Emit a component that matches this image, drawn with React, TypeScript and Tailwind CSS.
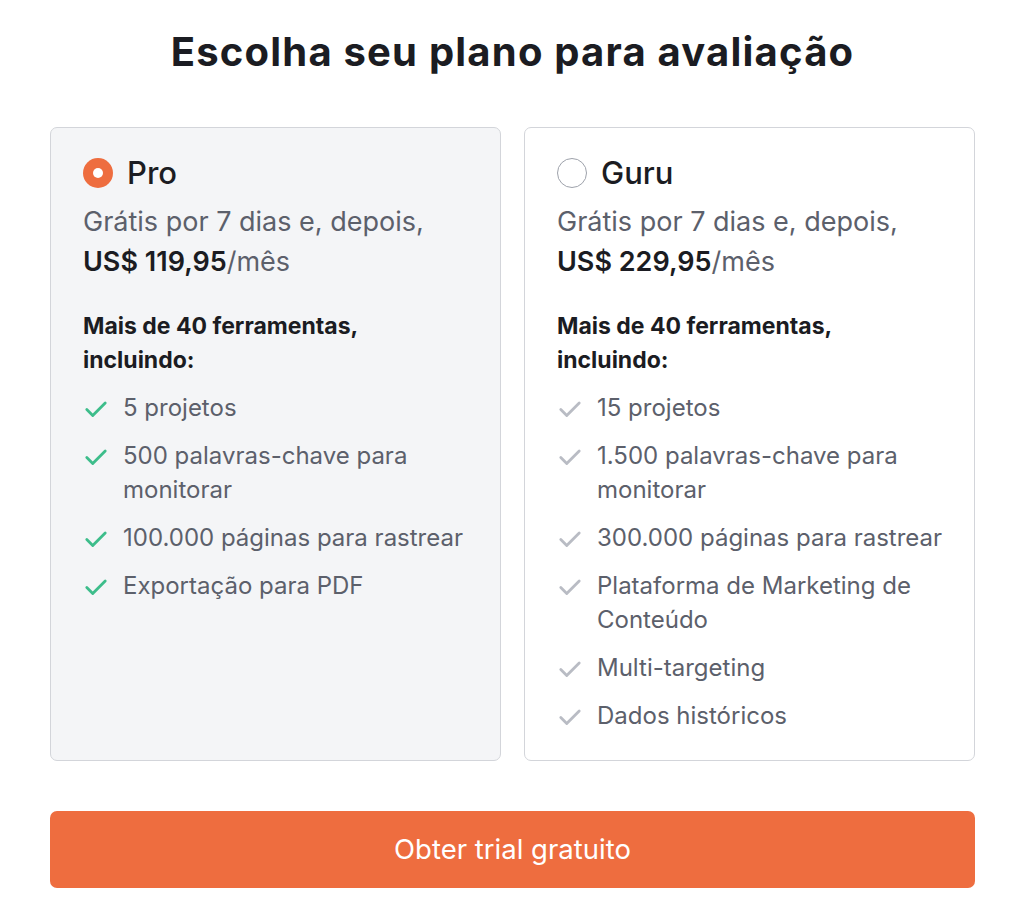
import React from 'react'

type Plan = {
  name: string
  price: string
  selected: boolean
  features: string[]
}

const plans: Plan[] = [
  {
    name: 'Pro',
    price: 'US$ 119,95',
    selected: true,
    features: ['5 projetos', '500 palavras-chave para monitorar', '100.000 páginas para rastrear', 'Exportação para PDF'],
  },
  {
    name: 'Guru',
    price: 'US$ 229,95',
    selected: false,
    features: [
      '15 projetos',
      '1.500 palavras-chave para monitorar',
      '300.000 páginas para rastrear',
      'Plataforma de Marketing de Conteúdo',
      'Multi-targeting',
      'Dados históricos',
    ],
  },
]

function Check({ active }: { active: boolean }) {
  return (
    <svg
      viewBox="0 0 24 24"
      className={active ? 'h-[26px] w-[26px] shrink-0 text-[#3dbd8b]' : 'h-[26px] w-[26px] shrink-0 text-[#b9bcc4]'}
      fill="none"
      stroke="currentColor"
      strokeWidth={2.6}
      strokeLinecap="round"
      strokeLinejoin="round"
    >
      <path d="M3.5 12.5l5.5 5.5L20.5 6.5" />
    </svg>
  )
}

function Radio({ checked }: { checked: boolean }) {
  if (checked) {
    return (
      <span className="flex h-[30px] w-[30px] shrink-0 items-center justify-center rounded-full bg-[#ee6d3f]">
        <span className="h-[10px] w-[10px] rounded-full bg-white" />
      </span>
    )
  }
  return <span className="h-[30px] w-[30px] shrink-0 rounded-full border-[1.5px] border-[#9ea2ab] bg-white" />
}

function PlanCard({ plan }: { plan: Plan }) {
  return (
    <div
      className={
        plan.selected
          ? 'rounded-[7px] border border-[#d3d5da] bg-[#f4f5f7] pb-[27px] pl-8 pr-6 pt-[27px]'
          : 'rounded-[7px] border border-[#d3d5da] bg-white pb-[27px] pl-8 pr-6 pt-[27px]'
      }
    >
      <div className="flex items-center gap-[14px]">
        <Radio checked={plan.selected} />
        <span className="text-[31px] font-medium leading-[36px] text-[#1b1c22]">{plan.name}</span>
      </div>
      <p className="mt-[11px] text-[27px] leading-[40px] text-[#5c606b]">
        Grátis por 7 dias e, depois,
        <br />
        <span className="font-semibold text-[#1b1c22]">{plan.price}</span>/mês
      </p>
      <p className="mt-[27px] text-[23px] font-bold leading-[34px] text-[#1b1c22]">
        Mais de 40 ferramentas,
        <br />
        incluindo:
      </p>
      <ul className="mt-[14px] flex flex-col gap-[14px]">
        {plan.features.map((f) => (
          <li key={f} className="flex items-start gap-[14px]">
            <span className="pt-[5px]">
              <Check active={plan.selected} />
            </span>
            <span className="text-[24px] leading-[34px] text-[#5c606b]">{f}</span>
          </li>
        ))}
      </ul>
    </div>
  )
}

export default function App() {
  return (
    <div className="min-h-screen bg-white pt-[28px] font-['Inter',sans-serif]">
      <div className="ml-[50px] w-[925px]">
        <h1 className="text-center text-[40px] font-bold leading-[48px] tracking-[1.2px] text-[#1b1c22]">
          Escolha seu plano para avaliação
        </h1>
        <div className="mt-[51px] grid grid-cols-2 gap-[23px]">
          {plans.map((p) => (
            <PlanCard key={p.name} plan={p} />
          ))}
        </div>
        <button className="mt-[50px] flex h-[77px] w-full items-center justify-center rounded-[7px] bg-[#ee6d3f] text-[27.5px] text-white">
          Obter trial gratuito
        </button>
      </div>
    </div>
  )
}
